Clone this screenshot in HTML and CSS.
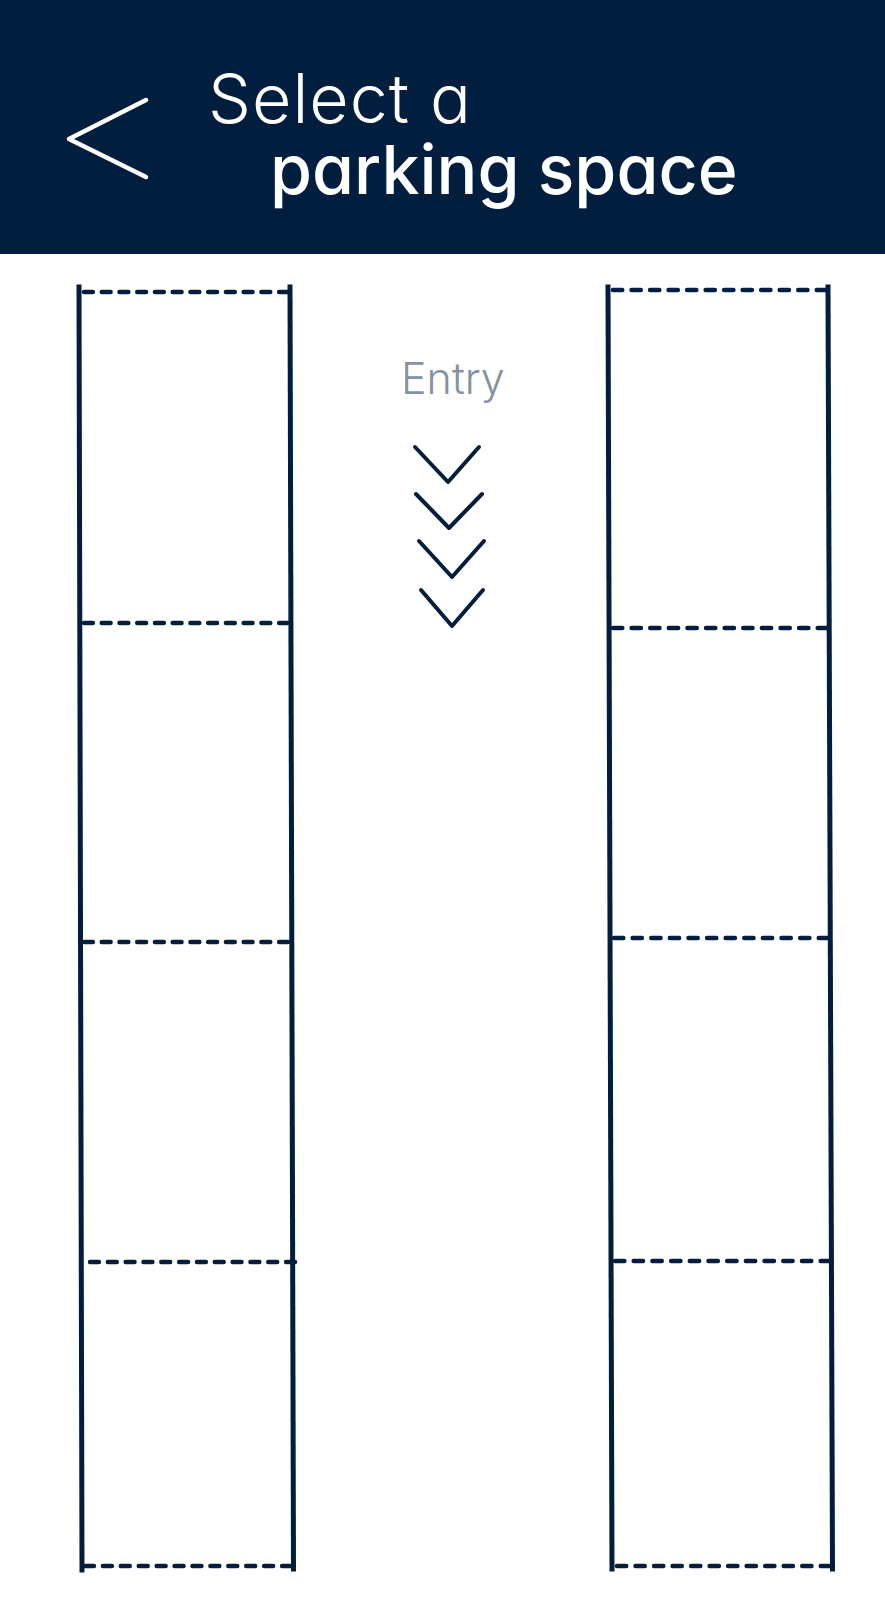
FILE: index.html
```html
<!DOCTYPE html>
<html lang="en">
<head>
  <meta charset="UTF-8" />
  <meta name="viewport" content="width=device-width, initial-scale=1.0" />
  <title>Select a parking space</title>
  <link rel="stylesheet" href="styles.css">
</head>
<body>
  <header class="topbar">
    <button class="back" aria-label="Back">
      <svg viewBox="0 0 86 86" width="86" height="86">
        <polyline points="82,4 5,43 82,81" />
      </svg>
    </button>
    <h1 class="title">
      <span class="title-light">Select a</span>
      <span class="title-bold">parking space</span>
    </h1>
  </header>

  <!-- parking lot -->
  <main class="lot">
    <svg class="lot-map" viewBox="0 0 885 1346" width="885" height="1346">
      <g class="lane-edge">
        <line x1="79" y1="33" x2="82" y2="1316" />
        <line x1="290" y1="33" x2="293.5" y2="1315" />
        <line x1="608" y1="33" x2="612" y2="1315" />
        <line x1="828" y1="33" x2="832.5" y2="1315" />
      </g>
      <!-- pathLength 207 = 12 dashes, ending on a dash -->
      <g class="bay-line">
        <line x1="84" y1="38" x2="288" y2="38" pathLength="207" />
        <line x1="84" y1="369" x2="288" y2="369" pathLength="207" />
        <line x1="84" y1="688" x2="288" y2="688" pathLength="207" />
        <line x1="90" y1="1008" x2="295" y2="1008" pathLength="207" />
        <line x1="85" y1="1312" x2="291" y2="1312" pathLength="207" />

        <line x1="613" y1="36" x2="826" y2="36" pathLength="207" />
        <line x1="613" y1="374" x2="827" y2="374" pathLength="207" />
        <line x1="614" y1="684" x2="828" y2="684" pathLength="207" />
        <line x1="615" y1="1007" x2="830" y2="1007" pathLength="207" />
        <line x1="617" y1="1312" x2="830" y2="1312" pathLength="207" />
      </g>

      <text class="entry" x="401" y="140">Entry</text>
      <g class="arrows">
        <polyline points="415,193 448,228 479,193" />
        <polyline points="416,240 449,274 482,240" />
        <polyline points="419,287 452,323 484,287" />
        <polyline points="421,336 452,372 483,336" />
      </g>
    </svg>
  </main>
</body>
</html>
```

FILE: styles.css
```css
body {
  margin: 0;
  padding: 0;
  background: #fff;
  font-family: Inter, "Noto Sans", sans-serif;
  font-feature-settings: "cv11";
}

.topbar {
  display: flex;
  align-items: flex-start;
  height: 254px;
  box-sizing: border-box;
  padding: 63px 0 0 64px;
  background-color: #011e3e;
  color: #fff;
}

.back {
  margin: 33px 0 0 0;
  padding: 0;
  border: none;
  background: none;
  width: 86px;
  height: 86px;
  cursor: pointer;
}

.back svg {
  display: block;
}

.back polyline {
  fill: none;
  stroke: #fff;
  stroke-width: 4.5;
  stroke-linecap: round;
  stroke-linejoin: round;
}

.title {
  margin: 0 0 0 58px;
  font-size: 68px;
  line-height: 71px;
  letter-spacing: -0.5px;
}

.title span {
  display: block;
}

.title-light {
  font-weight: 300;
  letter-spacing: 1px;
}

.title-bold {
  font-weight: 520;
  letter-spacing: 0;
  margin-left: 62px;
}

.lot-map {
  display: block;
}

.lane-edge line {
  stroke: #021e3f;
  stroke-width: 5;
  stroke-linecap: square;
}

.bay-line line {
  stroke: #021e3f;
  stroke-width: 4.5;
  stroke-dasharray: 9 9;
  stroke-linecap: round;
}

.entry {
  font-family: Inter, "Noto Sans", sans-serif;
  font-size: 43px;
  font-weight: 300;
  fill: #8592a3;
}

.arrows polyline {
  fill: none;
  stroke: #021e3f;
  stroke-width: 4;
  stroke-linecap: round;
  stroke-linejoin: round;
}
```
